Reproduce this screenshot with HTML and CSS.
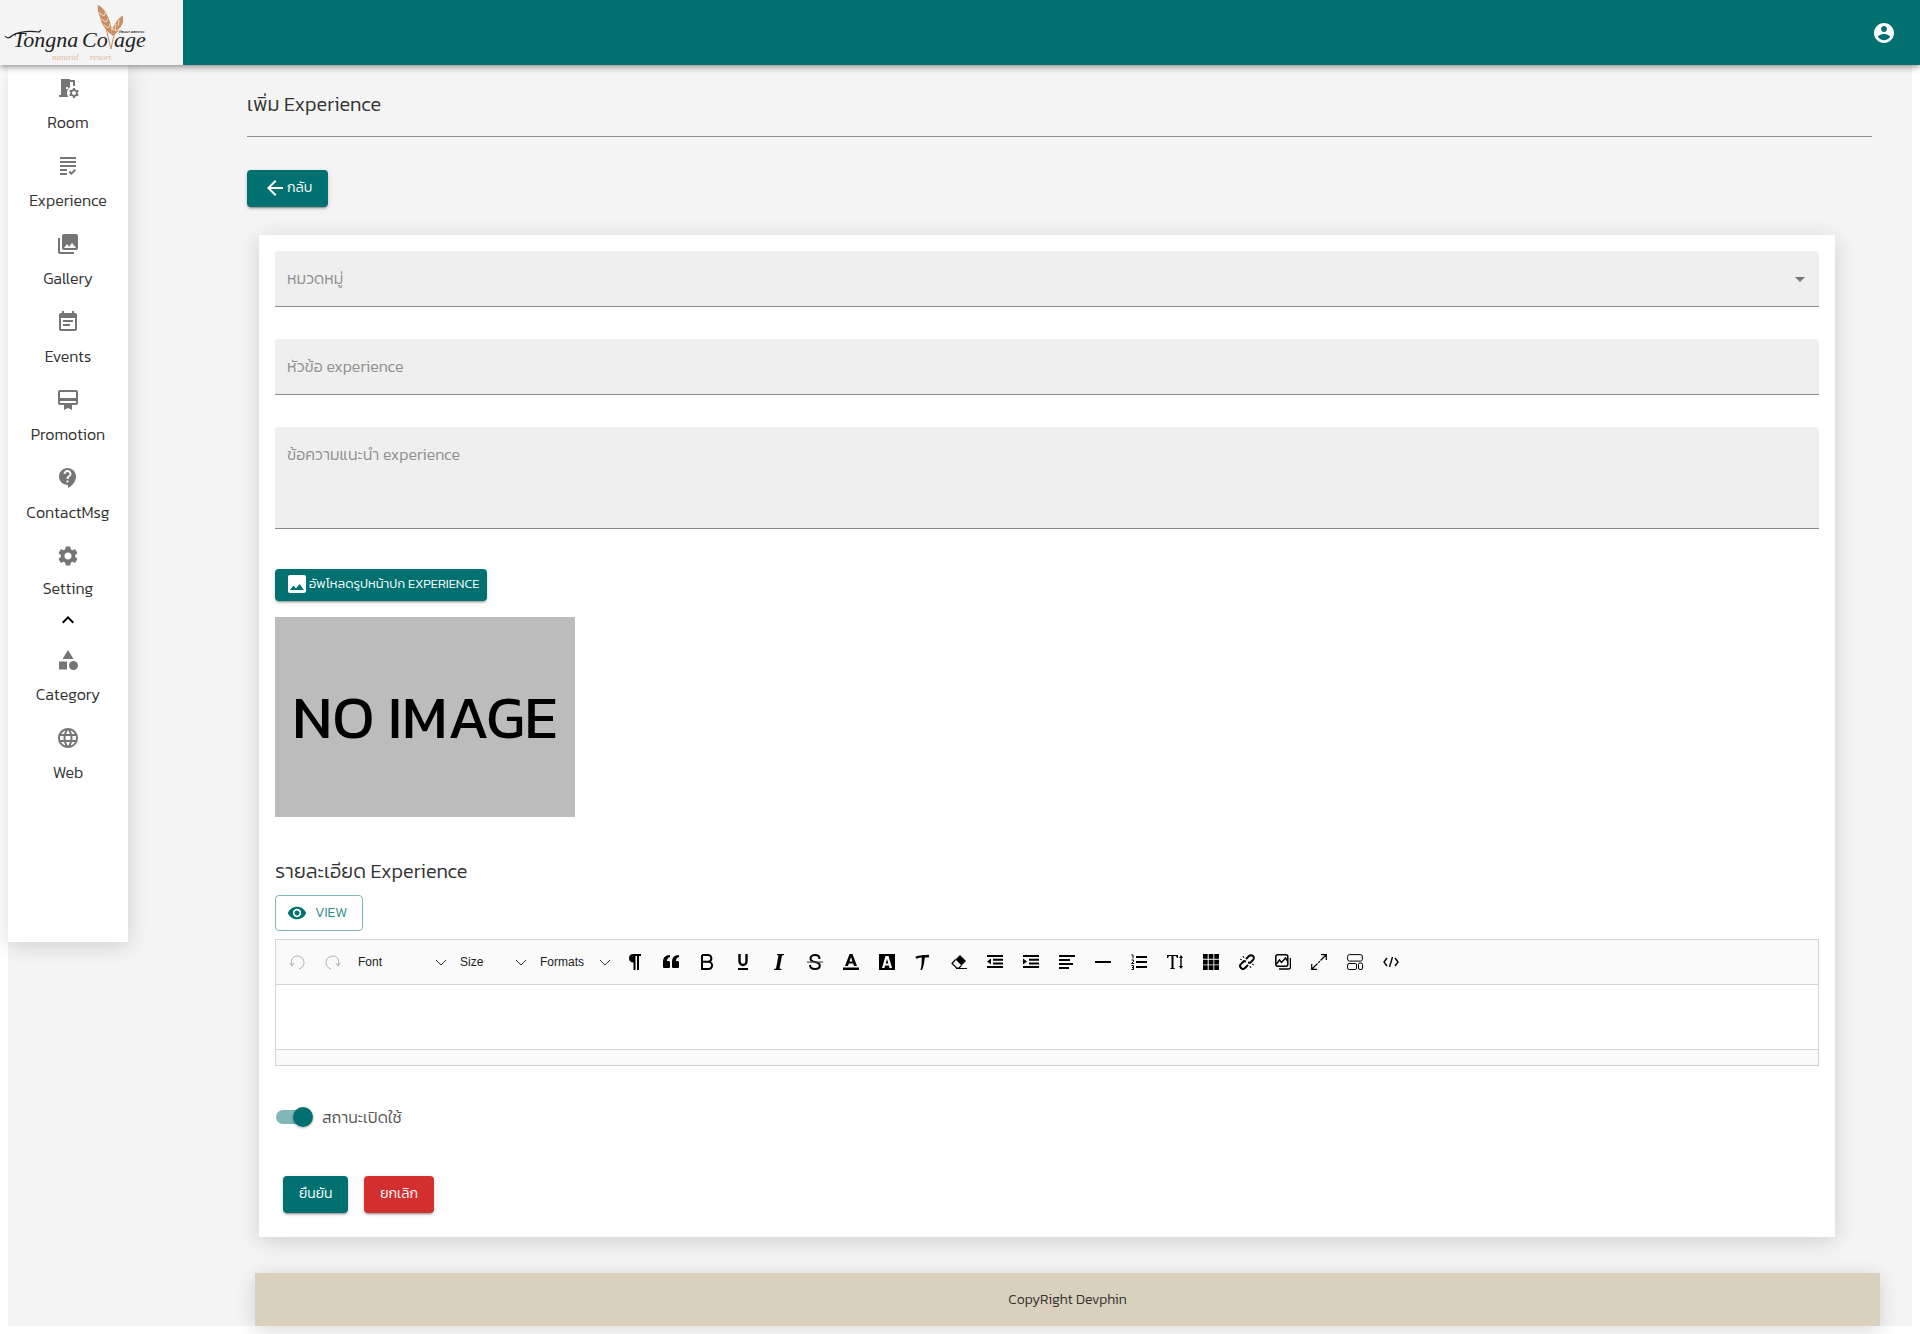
FILE: index.html
```html
<!DOCTYPE html>
<html lang="th">
<head>
<meta charset="utf-8">
<title>Tongna Cottage</title>
<link rel="stylesheet" href="styles.css">
</head>
<body>
<header class="topbar">
  <a class="brand" href="#" aria-label="Tongna Cottage">
    <svg width="150" height="65" viewBox="0 0 150 65">
      <g class="script">
        <text x="13" y="47">Tongna</text>
        <text x="82" y="47">Co</text>
        <text x="114" y="47">age</text>
      </g>
      <path d="M5 36q3 4 8-1 10-5 26-3l2-2" fill="none" stroke="#222" stroke-width="1.2"/>
      <g fill="none" stroke="#c98f63" stroke-width="1"><path d="M98 5q9 22 13 44M122 16q-8 14-11 33"/></g>
      <g fill="#c98f63">
        <path d="M98 5q6 3 9 10 5 9 5 20l-4-3q-7-8-8-15-3-6-2-12z"/>
        <path d="M123 16q1 7-3 12-3 6-8 8-1-7 3-12 3-6 8-8z"/>
      </g>
      <g stroke="#f1dcc8" stroke-width="1" fill="none"><path d="M99 13l5 3 2-5M101 19l5 3 3-5M104 25l4 3 3-5M115 30l1-6M118 26l1-6M112 29l4 2 4-3"/></g>
      <text class="brand-th" x="119" y="33">ท้องนา คอทเทจ</text>
      <text class="brand-sub" x="52" y="60">natural</text>
      <text class="brand-sub" x="90" y="60">resort</text>
    </svg>
  </a>
  <button class="account" aria-label="Account">
    <svg class="icon" viewBox="0 0 24 24"><path d="M12 2C6.48 2 2 6.48 2 12s4.480 10 10 10 10-4.480 10-10S17.520 2 12 2zm0 3c1.660 0 3 1.340 3 3s-1.340 3-3 3-3-1.340-3-3 1.340-3 3-3zm0 14.200c-2.500 0-4.710-1.280-6-3.220.03-1.990 4-3.080 6-3.080 1.990 0 5.970 1.090 6 3.080-1.290 1.940-3.500 3.220-6 3.220z"/></svg>
  </button>
</header>

<div class="shell">
  <nav class="sidebar">
    <a class="nav-item" href="#"><svg class="icon" viewBox="0 0 24 24"><path fill-rule="evenodd" d="M14 11.260V6h3v4h2V4h-5V3H5v16H3v2h9.260C11.470 19.870 11 18.490 11 17c0-2.380 1.190-4.470 3-5.740zM10 11h2v2h-2zM21.690 16.370l1.140-1-1-1.730-1.450.49c-.32-.27-.68-.48-1.080-.63L19 12h-2l-.3 1.490c-.4.15-.76.36-1.080.63l-1.450-.49-1 1.730 1.140 1c-.08.5-.08.76 0 1.260l-1.140 1 1 1.730 1.450-.49c.32.27.68.48 1.080.63L17 22h2l.3-1.490c.4-.15.76-.36 1.080-.63l1.450.49 1-1.730-1.140-1c.08-.51.08-.77 0-1.270zM18 19c-1.100 0-2-.9-2-2s.9-2 2-2 2 .9 2 2-.9 2-2 2z"/></svg><span>Room</span></a>
    <a class="nav-item" href="#"><svg class="icon" viewBox="0 0 24 24"><path d="M4 7h16v2H4V7zm0 6h16v-2H4v2zm0 4h7v-2H4v2zm0 4h7v-2H4v2zm11.410-2.830L14 16.750l-1.410 1.410L15.410 21 20 16.420 18.580 15l-3.170 3.170zM4 3v2h16V3H4z"/></svg><span>Experience</span></a>
    <a class="nav-item" href="#"><svg class="icon" viewBox="0 0 24 24"><path d="M22 16V4c0-1.100-.9-2-2-2H8c-1.100 0-2 .9-2 2v12c0 1.100.9 2 2 2h12c1.100 0 2-.9 2-2zm-11-4l2.030 2.710L16 11l4 5H8l3-4zM2 6v14c0 1.100.9 2 2 2h14v-2H4V6H2z"/></svg><span>Gallery</span></a>
    <a class="nav-item" href="#"><svg class="icon" viewBox="0 0 24 24"><path d="M17 10H7v2h10v-2zm2-7h-1V1h-2v2H8V1H6v2H5c-1.110 0-1.990.9-1.990 2L3 19c0 1.100.89 2 2 2h14c1.100 0 2-.9 2-2V5c0-1.100-.9-2-2-2zm0 16H5V8h14v11zm-5-5H7v2h7v-2z"/></svg><span>Events</span></a>
    <a class="nav-item" href="#"><svg class="icon" viewBox="0 0 24 24"><path d="M20 2H4c-1.110 0-2 .89-2 2v11c0 1.110.89 2 2 2h4v5l4-2 4 2v-5h4c1.110 0 2-.89 2-2V4c0-1.110-.89-2-2-2zm0 13H4v-2h16v2zm0-5H4V4h16v6z"/></svg><span>Promotion</span></a>
    <a class="nav-item" href="#"><svg class="icon" viewBox="0 0 24 24"><path d="M11.500 2C6.810 2 3 5.810 3 10.500S6.810 19 11.500 19h.5v3c4.860-2.340 8-7 8-11.500C20 5.810 16.190 2 11.500 2zm1 14.500h-2v-2h2v2zm0-3.500h-2c0-3.250 3-3 3-5 0-1.100-.9-2-2-2s-2 .9-2 2h-2c0-2.210 1.790-4 4-4s4 1.790 4 4c0 2.500-3 2.750-3 5z"/></svg><span>ContactMsg</span></a>
    <button class="nav-item nav-group" aria-expanded="true"><svg class="icon" viewBox="0 0 24 24"><path d="M19.140 12.940c.04-.3.06-.61.06-.94 0-.32-.02-.64-.07-.94l2.030-1.580c.18-.14.23-.41.12-.61l-1.920-3.320c-.12-.22-.37-.29-.59-.22l-2.390.96c-.5-.38-1.030-.7-1.620-.94l-.36-2.540c-.04-.24-.24-.41-.48-.41h-3.840c-.24 0-.43.17-.47.41l-.36 2.540c-.59.24-1.130.57-1.620.94l-2.390-.96c-.22-.08-.47 0-.59.22L2.740 8.870c-.12.21-.08.47.12.61l2.030 1.580c-.05.3-.09.63-.09.94s.02.64.07.94l-2.030 1.580c-.18.14-.23.41-.12.61l1.920 3.320c.12.22.37.29.59.22l2.390-.96c.5.38 1.030.7 1.620.94l.36 2.540c.05.24.24.41.48.41h3.840c.24 0 .44-.17.47-.41l.36-2.540c.59-.24 1.130-.56 1.620-.94l2.390.96c.22.08.47 0 .59-.22l1.920-3.320c.12-.22.07-.47-.12-.61l-2.010-1.580zM12 15.600c-1.980 0-3.600-1.620-3.600-3.600s1.620-3.600 3.600-3.600 3.600 1.620 3.600 3.600-1.620 3.600-3.600 3.600z"/></svg><span>Setting</span><svg class="chevron" viewBox="0 0 24 24"><path d="M12 8l-6 6 1.410 1.410L12 10.830l4.590 4.580L18 14z"/></svg></button>
    <a class="nav-item" href="#"><svg class="icon" viewBox="0 0 24 24"><path d="M12 2l-5.500 9h11zM3 13.500h8v8H3z"/><circle cx="17.500" cy="17.500" r="4.500"/></svg><span>Category</span></a>
    <a class="nav-item" href="#"><svg class="icon" viewBox="0 0 24 24"><path d="M11.990 2C6.470 2 2 6.480 2 12s4.470 10 9.990 10C17.520 22 22 17.520 22 12S17.520 2 11.990 2zm6.930 6h-2.950c-.32-1.250-.78-2.450-1.380-3.560 1.840.63 3.370 1.910 4.330 3.560zM12 4.040c.83 1.200 1.480 2.530 1.910 3.960h-3.820c.43-1.430 1.080-2.760 1.910-3.960zM4.260 14C4.100 13.360 4 12.690 4 12s.1-1.360.26-2h3.380c-.08.66-.14 1.320-.14 2s.06 1.340.14 2H4.260zm.82 2h2.950c.32 1.250.78 2.450 1.380 3.560-1.840-.63-3.370-1.900-4.330-3.560zm2.950-8H5.080c.96-1.660 2.490-2.930 4.330-3.560C8.810 5.550 8.350 6.750 8.030 8zM12 19.960c-.83-1.200-1.480-2.530-1.910-3.960h3.820c-.43 1.430-1.080 2.760-1.910 3.960zM14.340 14H9.660c-.09-.66-.16-1.320-.16-2s.07-1.350.16-2h4.680c.09.65.16 1.320.16 2s-.07 1.340-.16 2zm.25 5.560c.6-1.110 1.060-2.310 1.380-3.560h2.950c-.96 1.650-2.490 2.930-4.330 3.560zM16.360 14c.08-.66.14-1.320.14-2s-.06-1.340-.14-2h3.380c.16.64.26 1.310.26 2s-.1 1.360-.26 2h-3.380z"/></svg><span>Web</span></a>
  </nav>

  <div class="content">
    <main>
      <h1>เพิ่ม Experience</h1>
      <hr>
      <button class="btn back"><svg class="icon" viewBox="0 0 24 24"><path d="M20 11H7.830l5.590-5.590L12 4l-8 8 8 8 1.410-1.410L7.830 13H20z"/></svg>กลับ</button>

      <form class="card">
        <div class="field">
          <select id="category"><option value=""></option></select>
          <label for="category">หมวดหมู่</label>
          <svg class="arrow" viewBox="0 0 24 24"><path d="M7 10l5 5 5-5z"/></svg>
        </div>
        <div class="field">
          <input id="title" type="text">
          <label for="title">หัวข้อ experience</label>
        </div>
        <div class="field">
          <textarea id="intro"></textarea>
          <label for="intro">ข้อความแนะนำ experience</label>
        </div>

        <button type="button" class="btn upload"><svg class="icon" viewBox="0 0 24 24"><path d="M21 19V5c0-1.100-.9-2-2-2H5c-1.100 0-2 .9-2 2v14c0 1.100.9 2 2 2h14c1.100 0 2-.9 2-2zM8.500 13.500l2.500 3.010L14.500 12l4.500 6H5l3.500-4.500z"/></svg>อัพโหลดรูปหน้าปก EXPERIENCE</button>
        <div class="cover">NO IMAGE</div>

        <h2>รายละเอียด Experience</h2>
        <button type="button" class="view"><svg class="icon" viewBox="0 0 24 24"><path d="M12 4.500C7 4.500 2.730 7.610 1 12c1.730 4.390 6 7.500 11 7.500s9.270-3.110 11-7.500c-1.730-4.390-6-7.500-11-7.500zM12 17c-2.760 0-5-2.240-5-5s2.240-5 5-5 5 2.240 5 5-2.240 5-5 5zm0-8c-1.660 0-3 1.340-3 3s1.340 3 3 3 3-1.340 3-3-1.340-3-3-3z"/></svg>VIEW</button>

        <div class="editor">
          <div class="tools">
            <button type="button" class="tool off" aria-label="Undo"><svg viewBox="0 0 16 16"><path class="s" d="M1 9l2 3 2-3M3 12C1 6 4 2 8 2s7 3 7 6.500-2 5.500-5 6.500"/></svg></button>
            <button type="button" class="tool off" aria-label="Redo"><svg viewBox="0 0 16 16"><path class="s" d="M15 9l-2 3-2-3M13 12C15 6 12 2 8 2S1 5 1 8.500 3 14 6 15"/></svg></button>
            <div class="pick pick-font"><select aria-label="Font"><option>Font</option></select><svg viewBox="0 0 10 10"><path d="M0 3l5 5 5-5"/></svg></div>
            <div class="pick pick-size"><select aria-label="Size"><option>Size</option></select><svg viewBox="0 0 10 10"><path d="M0 3l5 5 5-5"/></svg></div>
            <div class="pick pick-format"><select aria-label="Formats"><option>Formats</option></select><svg viewBox="0 0 10 10"><path d="M0 3l5 5 5-5"/></svg></div>
            <button type="button" class="tool" aria-label="Paragraph style"><svg viewBox="0 0 16 16"><path d="M6 0h8v2h-2v14h-2V2H8.500v14h-2V8.500C3.500 8.500 2 6.500 2 4.200S3.500 0 6 0z"/></svg></button>
            <button type="button" class="tool" aria-label="Blockquote"><svg viewBox="0 0 16 16"><path d="M7 1v2C5 3.500 4 5 4 7h1.500C6.500 7 7 7.500 7 8.500v4c0 1-.5 1.500-1.500 1.500h-4C.5 14 0 13.500 0 12.500V8c0-4 2-7 7-7zM16 1v2c-2 .5-3 2-3 4h1.500c1 0 1.500.5 1.500 1.500v4c0 1-.5 1.500-1.500 1.500h-4c-1 0-1.500-.5-1.500-1.500V8c0-4 2-7 7-7z"/></svg></button>
            <button type="button" class="tool" aria-label="Bold"><svg viewBox="0 0 16 16"><path d="M3 1h6a3.400 3.400 0 0 1 0 6.800H3M3 7.800h6.500a3.600 3.600 0 0 1 0 7.200H3zV1" fill="none" stroke="#000" stroke-width="2"/></svg></button>
            <button type="button" class="tool" aria-label="Underline"><svg viewBox="0 0 16 16"><path d="M4.500 0v7.500a3.500 3.500 0 0 0 7 0V0" fill="none" stroke="#000" stroke-width="2.400"/><path d="M3 14h10v2H3z"/></svg></button>
            <button type="button" class="tool" aria-label="Italic"><svg viewBox="0 0 16 16"><path d="M6 0h7v1l-2 .5L8.500 14.500l2 .5v1H3v-1l2-.5L7.500 1.500 6 1z"/></svg></button>
            <button type="button" class="tool" aria-label="Strike"><svg viewBox="0 0 16 16"><path d="M12.500 5c0-2.500-2-4-4.500-4S3.500 2.500 3.500 4.500 5 7.500 8 8s4.800 1.500 4.800 3.500S11 15 8 15s-5-1.500-5-4" fill="none" stroke="#000" stroke-width="2"/><path d="M0 7.500h16v1.200H0z" fill="#555"/></svg></button>
            <button type="button" class="tool" aria-label="Font color"><svg viewBox="0 0 16 16"><path fill-rule="evenodd" d="M6.500 0h3L14 12h-3l-.8-2.400H5.800L5 12H2zM8 3L6.500 7.500h3zM0 13.500h16V16H0z"/></svg></button>
            <button type="button" class="tool" aria-label="Highlight color"><svg viewBox="0 0 16 16"><path fill-rule="evenodd" d="M0 0h16v16H0zM6.500 2L3 14h2.500l.6-2.500h3.800l.6 2.500H13L9.500 2zM8 5l1.300 4.500H6.700z"/></svg></button>
            <button type="button" class="tool" aria-label="Text style"><svg viewBox="0 0 16 16"><path d="M1 4C4 1.500 9 3 14 2" fill="none" stroke="#000" stroke-width="2.400"/><path d="M7 1h3.500C9 6 9.500 11 7 16H5.500C7 11 6.500 6 7 1z"/></svg></button>
            <button type="button" class="tool" aria-label="Remove format"><svg viewBox="0 0 16 16"><path d="M9 1l6 6-4.500 4.500-6-6z"/><path d="M4.500 5.500L1 9.500l4.500 4.500H8l2.500-2.500M5 14.500h11" fill="none" stroke="#000" stroke-width="1.200"/></svg></button>
            <button type="button" class="tool" aria-label="Outdent"><svg viewBox="0 0 16 16"><path d="M0 1h16v2H0zM6 4.700h10v2H6zM6 8.400h10v2H6zM0 12h16v2H0zM4 4.500v6L0 7.500z"/></svg></button>
            <button type="button" class="tool" aria-label="Indent"><svg viewBox="0 0 16 16"><path d="M0 1h16v2H0zM6 4.700h10v2H6zM6 8.400h10v2H6zM0 12h16v2H0zM0 4.500v6l4-3z"/></svg></button>
            <button type="button" class="tool" aria-label="Align"><svg viewBox="0 0 16 16"><path d="M0 1h16v2H0zM0 5h11v2H0zM0 9h14v2H0zM0 13h10v2H0z"/></svg></button>
            <button type="button" class="tool" aria-label="Horizontal rule"><svg viewBox="0 0 16 16"><path d="M0 7h16v2H0z"/></svg></button>
            <button type="button" class="tool" aria-label="List"><svg viewBox="0 0 16 16"><path d="M5 2h11v2H5zM5 7h11v2H5zM5 12h11v2H5z"/><path class="s" d="M.5 1H2v3.500M.5 6h2v1.500L.5 9.500h2.500M.5 11.500h2v4h-2M1 13.500h1.500"/></svg></button>
            <button type="button" class="tool" aria-label="Line height"><svg viewBox="0 0 16 16"><path d="M0 1h11v3h-1L9 2H6.500v12l1.500.500V15H3v-.5l1.500-.5V2H2L1 4H0z"/><path d="M14 1l2 3h-1.300v8H16l-2 3-2-3h1.300V4H12z"/></svg></button>
            <button type="button" class="tool" aria-label="Table"><svg viewBox="0 0 16 16"><path d="M0 0h4.700v4.700H0zM5.700 0h4.700v4.700H5.700zM11.300 0H16v4.700h-4.700zM0 5.700h4.700v4.700H0zM5.700 5.700h4.700v4.700H5.700zM11.300 5.700H16v4.700h-4.700zM0 11.300h4.700V16H0zM5.700 11.300h4.700V16H5.700zM11.300 11.300H16V16h-4.700z"/></svg></button>
            <button type="button" class="tool" aria-label="Link"><svg viewBox="0 0 16 16"><path d="M7 5l3-3a2.800 2.800 0 0 1 4 4l-3 3-2-.5M9 11l-3 3a2.800 2.800 0 0 1-4-4l3-3 2 .500" fill="none" stroke="#000" stroke-width="2"/><path class="s" d="M4 2l1 2M1 5l2 1M12 14l-1-2M15 11l-2-1"/></svg></button>
            <button type="button" class="tool" aria-label="Image"><svg viewBox="0 0 16 16"><rect x=".8" y=".8" width="12" height="11.500" rx="2" fill="none" stroke="#000" stroke-width="1.500"/><path d="M1.500 10l3-4 2 2.500 4-4.500 2 3M15.500 4v9q0 2-2 2H4" fill="none" stroke="#000" stroke-width="1.400"/></svg></button>
            <button type="button" class="tool" aria-label="Full screen"><svg viewBox="0 0 16 16"><path d="M10 .7h5.300V6M15 1L9.500 6.500M.7 10v5.300H6M1 15l5.500-5.500M7.200 8.800l1.600-1.600" fill="none" stroke="#000" stroke-width="1.200"/></svg></button>
            <button type="button" class="tool" aria-label="Template"><svg viewBox="0 0 16 16"><rect class="s" x=".6" y=".6" width="14.800" height="6.500" rx="2"/><rect class="s" x=".6" y="9.500" width="9" height="6" rx="1.500"/><rect class="s" x="11.500" y="9" width="4" height="6.500" rx="1.500"/></svg></button>
            <button type="button" class="tool" aria-label="Code view"><svg viewBox="0 0 16 16"><path d="M4 4L1 8l3 4M12 4l3 4-3 4M9.500 3l-3 10" fill="none" stroke="#000" stroke-width="1.400"/></svg></button>
          </div>
          <textarea class="body" aria-label="รายละเอียด Experience"></textarea>
          <div class="resize"></div>
        </div>

        <label class="switch"><input type="checkbox" checked><span>สถานะเปิดใช้</span></label>

        <div class="actions">
          <button type="submit" class="btn">ยืนยัน</button>
          <button type="button" class="btn danger">ยกเลิก</button>
        </div>
      </form>
    </main>
    <footer>CopyRight Devphin</footer>
  </div>
</div>
</body>
</html>
```

FILE: styles.css
```css
* { box-sizing: border-box; }
body {
  margin: 0;
  background: #fff;
  color: #333;
  font: 300 16px/24px Kanit, Roboto, "Noto Sans Thai", sans-serif;
}
button, input, select, textarea { font: inherit; color: inherit; margin: 0; border: 0; padding: 0; background: none; outline: 0; }
button { cursor: pointer; }
a { color: inherit; text-decoration: none; }
svg { display: block; flex: none; }
.icon { width: 24px; height: 24px; fill: currentColor; }

.topbar {
  position: relative;
  display: flex;
  align-items: center;
  justify-content: space-between;
  height: 65px;
  padding-right: 24px;
  background: #007070;
  box-shadow: 0 2px 4px -1px rgba(0,0,0,.2), 0 4px 5px rgba(0,0,0,.14), 0 1px 10px rgba(0,0,0,.12);
}
.brand { width: 183px; height: 65px; background: #f4f4f4; }
.script { font: italic 22px "Liberation Serif", serif; fill: #222; }
.brand-th { font-size: 4px; font-weight: 400; }
.brand-sub { font: italic 9px "Liberation Serif", serif; fill: #dcb89c; }
.account { color: #fff; }

.shell { display: flex; align-items: flex-start; margin: 0 8px 8px; background: #f4f4f4; }
.sidebar {
  width: 120px;
  min-height: 877px;
  flex: none;
  background: #fff;
  box-shadow: 0 4px 20px rgba(0,0,0,.15);
}
.nav-item { display: flex; flex-direction: column; align-items: center; width: 100%; padding: 11px 0 9px; gap: 10px; }
.nav-item .icon { color: #757575; }
.nav-group { padding-bottom: 5px; gap: 8px; }
.nav-group .chevron { width: 24px; height: 24px; fill: #000; }

.content { flex: 1; min-width: 0; padding-left: 119px; }
main { padding: 24px 40px 0 0; }
h1, h2 { margin: 0; font-size: 20px; line-height: 32px; font-weight: 300; }
h1 { line-height: 30px; }
hr { margin: 17px 0 33px; border: 0; border-top: 1px solid #8e8e8e; }

.btn {
  display: flex;
  align-items: center;
  justify-content: center;
  height: 37px;
  padding: 0 16px 2px;
  border-radius: 4px;
  background: #007070;
  color: #fff;
  font-size: 14px;
  box-shadow: 0 3px 1px -2px rgba(0,0,0,.2), 0 2px 2px rgba(0,0,0,.14), 0 1px 5px rgba(0,0,0,.12);
}
.danger { background: #d32f2f; }

.card {
  display: flex;
  flex-direction: column;
  align-items: flex-start;
  margin: 28px 37px 0 12px;
  padding: 16px 16px 24px;
  background: #fff;
  box-shadow: 0 4px 20px rgba(0,0,0,.15);
}
.field { display: grid; width: 100%; margin-bottom: 32px; color: #909090; }
.field > * { grid-area: 1 / 1; }
.field select, .field input, .field textarea {
  appearance: none;
  width: 100%;
  height: 56px;
  padding: 16px 12px;
  border-bottom: 1px solid #8a8a8a;
  border-radius: 4px 4px 0 0;
  background: #efefef;
  color: #333;
  resize: none;
}
.field textarea { height: 102px; }
.field label { padding: 15px 12px; pointer-events: none; justify-self: start; }
.arrow { width: 24px; height: 24px; margin-right: 7px; place-self: center end; fill: #757575; pointer-events: none; }

.upload { height: 32px; margin-top: 8px; padding: 0 8px 2px 10px; font-size: 13px; }
.cover {
  display: flex;
  align-items: center;
  justify-content: center;
  width: 300px;
  height: 200px;
  margin: 16px 0 38px;
  background: #bcbcbc;
  color: #000;
  font-size: 60px;
  font-weight: 400;
}
.view {
  display: flex;
  align-items: center;
  gap: 8px;
  height: 36px;
  margin: 8px 0;
  padding: 0 15px 0 11px;
  border: 1px solid #7fb7b7;
  border-radius: 4px;
  color: #2f8a8a;
  font-size: 14px;
}
.view .icon { width: 20px; height: 20px; color: #007070; }

.editor { width: 100%; border: 1px solid #d4d4d4; }
.tools { display: flex; align-items: center; flex-wrap: wrap; min-height: 45px; padding-left: 3px; background: #fafafa; border-bottom: 1px solid #d4d4d4; }
.tool { display: flex; align-items: center; justify-content: center; width: 36px; height: 36px; color: #000; }
.tool svg { width: 16px; height: 16px; }
.tool .s { fill: none; stroke: currentColor; }
.off { opacity: .3; }
.pick { display: grid; align-items: center; font: 12px/20px "Liberation Sans", sans-serif; color: #222; }
.pick > * { grid-area: 1 / 1; }
.pick select { appearance: none; width: 100%; height: 36px; padding-left: 7px; }
.pick svg { width: 10px; height: 10px; margin-right: 7px; justify-self: end; fill: none; stroke: #333; pointer-events: none; }
.pick-font { width: 102px; }
.pick-size { width: 80px; }
.pick-format { width: 84px; }
.body { display: block; width: 100%; height: 64px; padding: 16px; resize: none; }
.resize { height: 16px; background: #fafafa; border-top: 1px solid #d4d4d4; }

.switch { display: flex; align-items: center; gap: 12px; margin: 39px 0 47px; color: #555; }
.switch input {
  appearance: none;
  display: flex;
  align-items: center;
  justify-content: flex-end;
  width: 34px;
  height: 14px;
  margin-left: 1px;
  border-radius: 7px;
  background: #80b7b7;
}
.switch input::before {
  content: "";
  flex: none;
  width: 20px;
  height: 20px;
  margin-right: -3px;
  border-radius: 50%;
  background: #007070;
  box-shadow: 0 1px 3px rgba(0,0,0,.3);
}
.actions { display: flex; gap: 16px; padding-left: 8px; }

footer {
  display: flex;
  align-items: center;
  justify-content: center;
  height: 53px;
  margin: 36px 32px 0 8px;
  background: #d9d0bd;
  font-size: 14px;
  box-shadow: 0 4px 20px rgba(0,0,0,.15);
}
```
